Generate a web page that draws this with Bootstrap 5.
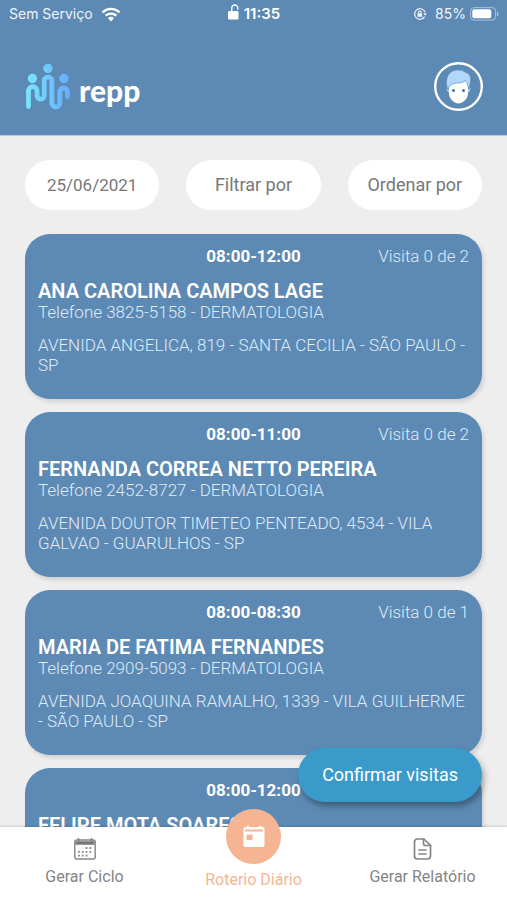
<!DOCTYPE html>
<html lang="pt-BR">
<head>
<meta charset="utf-8">
<meta name="viewport" content="width=device-width, initial-scale=1">
<title>repp - Roteiro Diário</title>
<link href="https://cdn.jsdelivr.net/npm/bootstrap@5.3.0/dist/css/bootstrap.min.css" rel="stylesheet">
<style>
  body { font-family: Roboto, "Liberation Sans", sans-serif; background: #eee; }
  .app { height: 100vh; }
  .top-area { background: #5d8ab4; border-bottom: 1px solid #b4cae2; }
  .status-bar { height: 28px; padding: 0 8px 0 9px; font: 400 14px/28px Inter, sans-serif; color: #eef4fa; }
  .status-bar .col-side { flex: 1 1 0; }
  .status-bar .clock { font-weight: 600; font-size: 15px; color: #fff; }
  .brand-bar { padding: 34px 24px 24px 25px; }
  .brand-name { font: 900 30px/32px Lato, sans-serif; color: #fff; }
  .avatar { width: 49px; height: 49px; }
  .filters { padding: 24px 25px; gap: 27px; }
  .filter-pill, .filter-pill:hover { background: #fff; color: #777; font-size: 18px; line-height: 24px; padding: 13px 0; border: 0; flex: 1 1 0; }
  .filter-date { font-size: 17px; }
  .visits { padding: 0 25px; gap: 13px; }
  .visit { background: #5d8ab4; color: #fff; border: 0; border-radius: 25px; padding: 12px 13px 24px; box-shadow: 2px 3px 4px rgba(0,0,0,.12); font-weight: 300; font-size: 17px; line-height: 20px; }
  .visit-head { display: grid; grid-template-columns: 1fr auto 1fr; margin-bottom: 14px; }
  .visit-time { grid-column: 2; font-weight: 700; }
  .visit-count, .visit-phone, .visit-address { color: #dfebf8; }
  .visit-name { font-size: 20px; line-height: 22px; font-weight: 600; margin: 0; }
  .visit-address { margin: 13px 0 0; }
  .confirm, .confirm:hover { right: 25px; bottom: 25px; background: #3a9bca; color: #fff; border: 0; font-size: 18px; line-height: 24px; padding: 15px 24px; box-shadow: 2px 4px 6px rgba(0,0,0,.35); }
  .tabs { background: #fff; box-shadow: 0 -1px 2px rgba(0,0,0,.15); height: 73px; font-size: 16px; line-height: 20px; position: relative; }
  .tab { flex: 1 1 0; color: #858585; padding-top: 10px; gap: 6px; }
  .tab-current { color: #f5b592; padding-top: 0; margin-top: -18px; }
  .tab-disc { width: 55px; height: 55px; background: #f5b592; }
</style>
</head>
<body>
<div class="app d-flex flex-column overflow-hidden">
  <header class="top-area">
    <div class="status-bar d-flex align-items-center">
      <div class="col-side d-flex align-items-center gap-2">
        <span>Sem Serviço</span>
        <svg width="20" height="15" viewBox="0 0 20 15" fill="none" stroke="#fff" stroke-width="2.4" aria-hidden="true"><path d="M1.5 5.3a12.2 12.2 0 0 1 17 0M4.7 8.7a7.7 7.7 0 0 1 10.6 0"/><path d="M10 14.5l-3-3.2a4.3 4.3 0 0 1 6 0z" fill="#fff" stroke="none"/></svg>
      </div>
      <div class="d-flex align-items-center gap-1">
        <svg class="mb-1" width="12" height="16" viewBox="0 0 12 16" aria-hidden="true"><rect x="0" y="7" width="10.5" height="8.5" rx="1.2" fill="#fff"/><path d="M3.8 7.5V4a3 3 0 0 1 6 0v1.8" fill="none" stroke="#fff" stroke-width="1.3"/></svg>
        <span class="clock">11:35</span>
      </div>
      <div class="col-side d-flex align-items-center justify-content-end gap-1">
        <svg class="me-1" width="14" height="14" viewBox="0 0 14 14" fill="none" stroke="#eef4fa" stroke-width="1.2" aria-hidden="true"><path d="M11.6 9.6A5.3 5.3 0 1 1 12 5.3"/><path d="M10.4 6.3h3.4L12.2 8.8z" fill="#eef4fa" stroke="none"/><rect x="4.5" y="6.4" width="4.6" height="3.4" fill="#eef4fa" stroke="none"/><path d="M5.5 6.5V5.3a1.3 1.3 0 0 1 2.6 0v1.2"/></svg>
        <span>85%</span>
        <svg width="29" height="14" viewBox="0 0 29 14" aria-hidden="true"><rect x=".6" y=".6" width="25" height="12.5" rx="3.5" fill="none" stroke="#a9c1da"/><rect x="2.3" y="2.3" width="19" height="9" rx="2" fill="#fff"/><path d="M27 4.5c2 .6 2 4.200 0 4.800z" fill="#a9c1da"/></svg>
      </div>
    </div>
    <div class="brand-bar d-flex justify-content-between align-items-center">
      <div class="d-flex align-items-end gap-2">
        <svg width="46" height="47" viewBox="0 0 46 47" aria-hidden="true">
          <defs><linearGradient id="wave" gradientUnits="userSpaceOnUse" x1="0" y1="20" x2="46" y2="20"><stop offset="0" stop-color="#7ce8fb"/><stop offset=".5" stop-color="#70c8fb"/><stop offset="1" stop-color="#66aaff"/></linearGradient></defs>
          <g fill="url(#wave)"><circle cx="7.500" cy="15.500" r="4.700"/><circle cx="23" cy="5.500" r="4.700"/><circle cx="39" cy="15.500" r="4.700"/></g>
          <path d="M3.500 43.500V28a4.300 4.300 0 0 1 8.600 0v4.500a3.600 3.600 0 0 0 7.200 0V18a3.800 3.800 0 0 1 7.600 0v22a4 4 0 0 0 8 0V28a4 4 0 0 1 7.600 0v5.500" fill="none" stroke="url(#wave)" stroke-width="4.800" stroke-linecap="round"/>
        </svg>
        <span class="brand-name mb-1">repp</span>
      </div>
      <a href="#" aria-label="Perfil">
        <svg class="avatar d-block" viewBox="0 0 49 49" aria-hidden="true">
          <circle cx="24.500" cy="24.500" r="23.300" fill="none" stroke="#fff" stroke-width="2.400"/>
          <path d="M12.500 26.500c1.500-.6 2.500 0 2.800 1v3c-1.600-.4-2.800-2-2.800-4zM36.500 26.500c-1.500-.6-2.500 0-2.800 1v3c1.600-.4 2.800-2 2.800-4z" fill="#b3d8fb"/>
          <path d="M15 18h19v13c0 3-1 5.500-3 7.200-2 1.600-3.800 3.300-6.500 3.300s-4.500-1.700-6.500-3.300c-2-1.700-3-4.200-3-7.200z" fill="#fff"/>
          <path d="M14 28c-1.200-3-2.300-7.500-1-12 1.600-5.500 6-8 11-8 3.500 0 6 .8 7.500 2.500 4 .5 5.500 4 5 8.500-.2 3-1 6-1.800 9-.5-4-1.300-7-3.200-9.500-4 4-10 1-14.500 4.500-2 1.500-2.500 3-3 5z" fill="#b0d8fd" stroke="#5d8ab4" stroke-width=".7"/>
          <circle cx="19.500" cy="28.500" r="1.500" fill="#4e70a7"/><circle cx="29.500" cy="28.500" r="1.500" fill="#4e70a7"/>
        </svg>
      </a>
    </div>
  </header>

  <main class="flex-grow-1 overflow-hidden position-relative">
    <div class="filters d-flex">
      <button type="button" class="btn rounded-pill filter-pill"><span class="filter-date">25/06/2021</span></button>
      <button type="button" class="btn rounded-pill filter-pill">Filtrar por</button>
      <button type="button" class="btn rounded-pill filter-pill">Ordenar por</button>
    </div>
    <div class="visits d-flex flex-column">
      <article class="visit card">
        <div class="visit-head"><span class="visit-time">08:00-12:00</span><span class="visit-count text-end">Visita 0 de 2</span></div>
        <h2 class="visit-name">ANA CAROLINA CAMPOS LAGE</h2>
        <span class="visit-phone">Telefone 3825-5158 - DERMATOLOGIA</span>
        <p class="visit-address">AVENIDA ANGELICA, 819 - SANTA CECILIA - SÃO PAULO - SP</p>
      </article>
      <article class="visit card">
        <div class="visit-head"><span class="visit-time">08:00-11:00</span><span class="visit-count text-end">Visita 0 de 2</span></div>
        <h2 class="visit-name">FERNANDA CORREA NETTO PEREIRA</h2>
        <span class="visit-phone">Telefone 2452-8727 - DERMATOLOGIA</span>
        <p class="visit-address">AVENIDA DOUTOR TIMETEO PENTEADO, 4534 - VILA GALVAO - GUARULHOS - SP</p>
      </article>
      <article class="visit card">
        <div class="visit-head"><span class="visit-time">08:00-08:30</span><span class="visit-count text-end">Visita 0 de 1</span></div>
        <h2 class="visit-name">MARIA DE FATIMA FERNANDES</h2>
        <span class="visit-phone">Telefone 2909-5093 - DERMATOLOGIA</span>
        <p class="visit-address">AVENIDA JOAQUINA RAMALHO, 1339 - VILA GUILHERME - SÃO PAULO - SP</p>
      </article>
      <article class="visit card">
        <div class="visit-head"><span class="visit-time">08:00-12:00</span></div>
        <h2 class="visit-name">FELIPE MOTA SOARES</h2>
      </article>
    </div>
    <button type="button" class="btn rounded-pill confirm position-absolute">Confirmar visitas</button>
  </main>

  <nav class="tabs d-flex flex-shrink-0" aria-label="Principal">
    <a href="#" class="tab d-flex flex-column align-items-center text-decoration-none">
      <svg width="24" height="24" viewBox="0 0 24 24" fill="none" stroke="#858585" aria-hidden="true"><rect x="1.800" y="3" width="20.400" height="19" rx="2" stroke-width="1.400"/><path d="M2.500 6h19" stroke="#777" stroke-width="3.500"/><path d="M5.500 1v4M18.500 1v4" stroke-width="1.500"/><path d="M12.600 11h7.500M5 14.800h15.100M5 18.600h11.300" stroke-width="1.800" stroke-dasharray="1.800 2"/></svg>
      <span>Gerar Ciclo</span>
    </a>
    <a href="#" class="tab tab-current d-flex flex-column align-items-center text-decoration-none" aria-current="page">
      <span class="tab-disc rounded-circle d-flex align-items-center justify-content-center">
        <svg width="24" height="24" viewBox="0 0 24 24" aria-hidden="true"><path d="M3.500 2H5V.8h2V2h10V.8h2V2h1.500a2 2 0 0 1 2 2v16a2 2 0 0 1-2 2h-17a2 2 0 0 1-2-2V4a2 2 0 0 1 2-2z" fill="#fff"/><path d="M3 5.500h18" stroke="#f5b592" stroke-width="2"/><rect x="4.500" y="9.500" width="6" height="5.500" rx=".8" fill="#f5b592"/></svg>
      </span>
      <span>Roterio Diário</span>
    </a>
    <a href="#" class="tab d-flex flex-column align-items-center text-decoration-none">
      <svg width="24" height="24" viewBox="0 0 24 24" fill="none" stroke="#858585" stroke-width="1.700" stroke-linecap="round" stroke-linejoin="round" aria-hidden="true"><path d="M13 2H6.500a3 3 0 0 0-3 3v14a3 3 0 0 0 3 3h10a3 3 0 0 0 3-3V8.500z"/><path d="M12.500 2v4.500a2 2 0 0 0 2 2h5M8 13h7M8 17h7"/></svg>
      <span>Gerar Relatório</span>
    </a>
  </nav>
</div>
<script src="https://cdn.jsdelivr.net/npm/bootstrap@5.3.0/dist/js/bootstrap.bundle.min.js"></script>
</body>
</html>
